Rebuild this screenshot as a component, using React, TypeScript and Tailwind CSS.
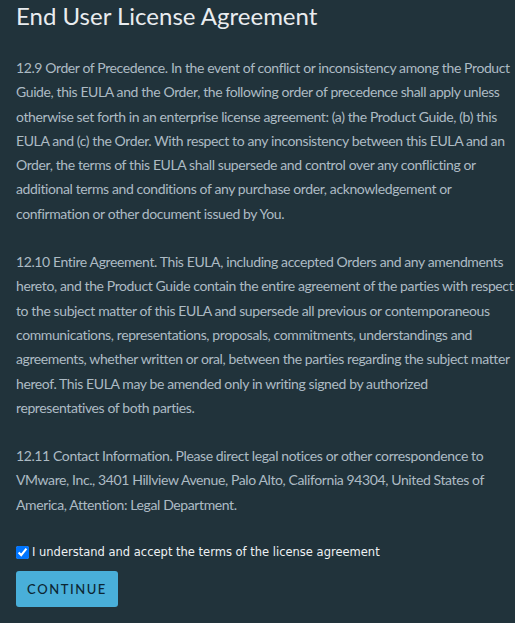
import React, { useState } from 'react';

const paragraphs: string[][] = [
  [
    '12.9 Order of Precedence. In the event of conflict or inconsistency among the Product',
    'Guide, this EULA and the Order, the following order of precedence shall apply unless',
    'otherwise set forth in an enterprise license agreement: (a) the Product Guide, (b) this',
    'EULA and (c) the Order. With respect to any inconsistency between this EULA and an',
    'Order, the terms of this EULA shall supersede and control over any conflicting or',
    'additional terms and conditions of any purchase order, acknowledgement or',
    'confirmation or other document issued by You.',
  ],
  [
    '12.10 Entire Agreement. This EULA, including accepted Orders and any amendments',
    'hereto, and the Product Guide contain the entire agreement of the parties with respect',
    'to the subject matter of this EULA and supersede all previous or contemporaneous',
    'communications, representations, proposals, commitments, understandings and',
    'agreements, whether written or oral, between the parties regarding the subject matter',
    'hereof. This EULA may be amended only in writing signed by authorized',
    'representatives of both parties.',
  ],
  [
    '12.11 Contact Information. Please direct legal notices or other correspondence to',
    'VMware, Inc., 3401 Hillview Avenue, Palo Alto, California 94304, United States of',
    'America, Attention: Legal Department.',
  ],
];

const App = () => {
  const [accepted, setAccepted] = useState(true);

  return (
    <div className="min-h-screen w-full overflow-hidden bg-[#21333b] font-['Lato',sans-serif]">
      <div className="px-4">
        <h2 className="text-[24px] leading-[32px] text-[#e9ecef] font-normal">End User License Agreement</h2>
        <div className="mt-6 flex flex-col gap-6">
          {paragraphs.map((lines, i) => (
            <p key={i} className="text-[14px] leading-[24.3px] tracking-[-0.028em] text-[#adbbc4] whitespace-nowrap">
              {lines.map((line, j) => (
                <span key={j} className="block">{line}</span>
              ))}
            </p>
          ))}
        </div>
        <label className="mt-[27px] flex items-center gap-[3px] font-['DejaVu_Sans',sans-serif] text-[11.5px] text-[#eef1f3]">
          <input
            type="checkbox"
            checked={accepted}
            onChange={e => setAccepted(e.target.checked)}
            className="m-0 h-[13px] w-[13px]"
          />
          I understand and accept the terms of the license agreement
        </label>
        <button
          disabled={!accepted}
          className="mt-[10px] h-9 w-[102px] rounded-[3px] bg-[#49afd9] text-[13px] font-medium tracking-[0.12em] text-[#0c2633]"
        >
          CONTINUE
        </button>
      </div>
    </div>
  );
};

export default App;
